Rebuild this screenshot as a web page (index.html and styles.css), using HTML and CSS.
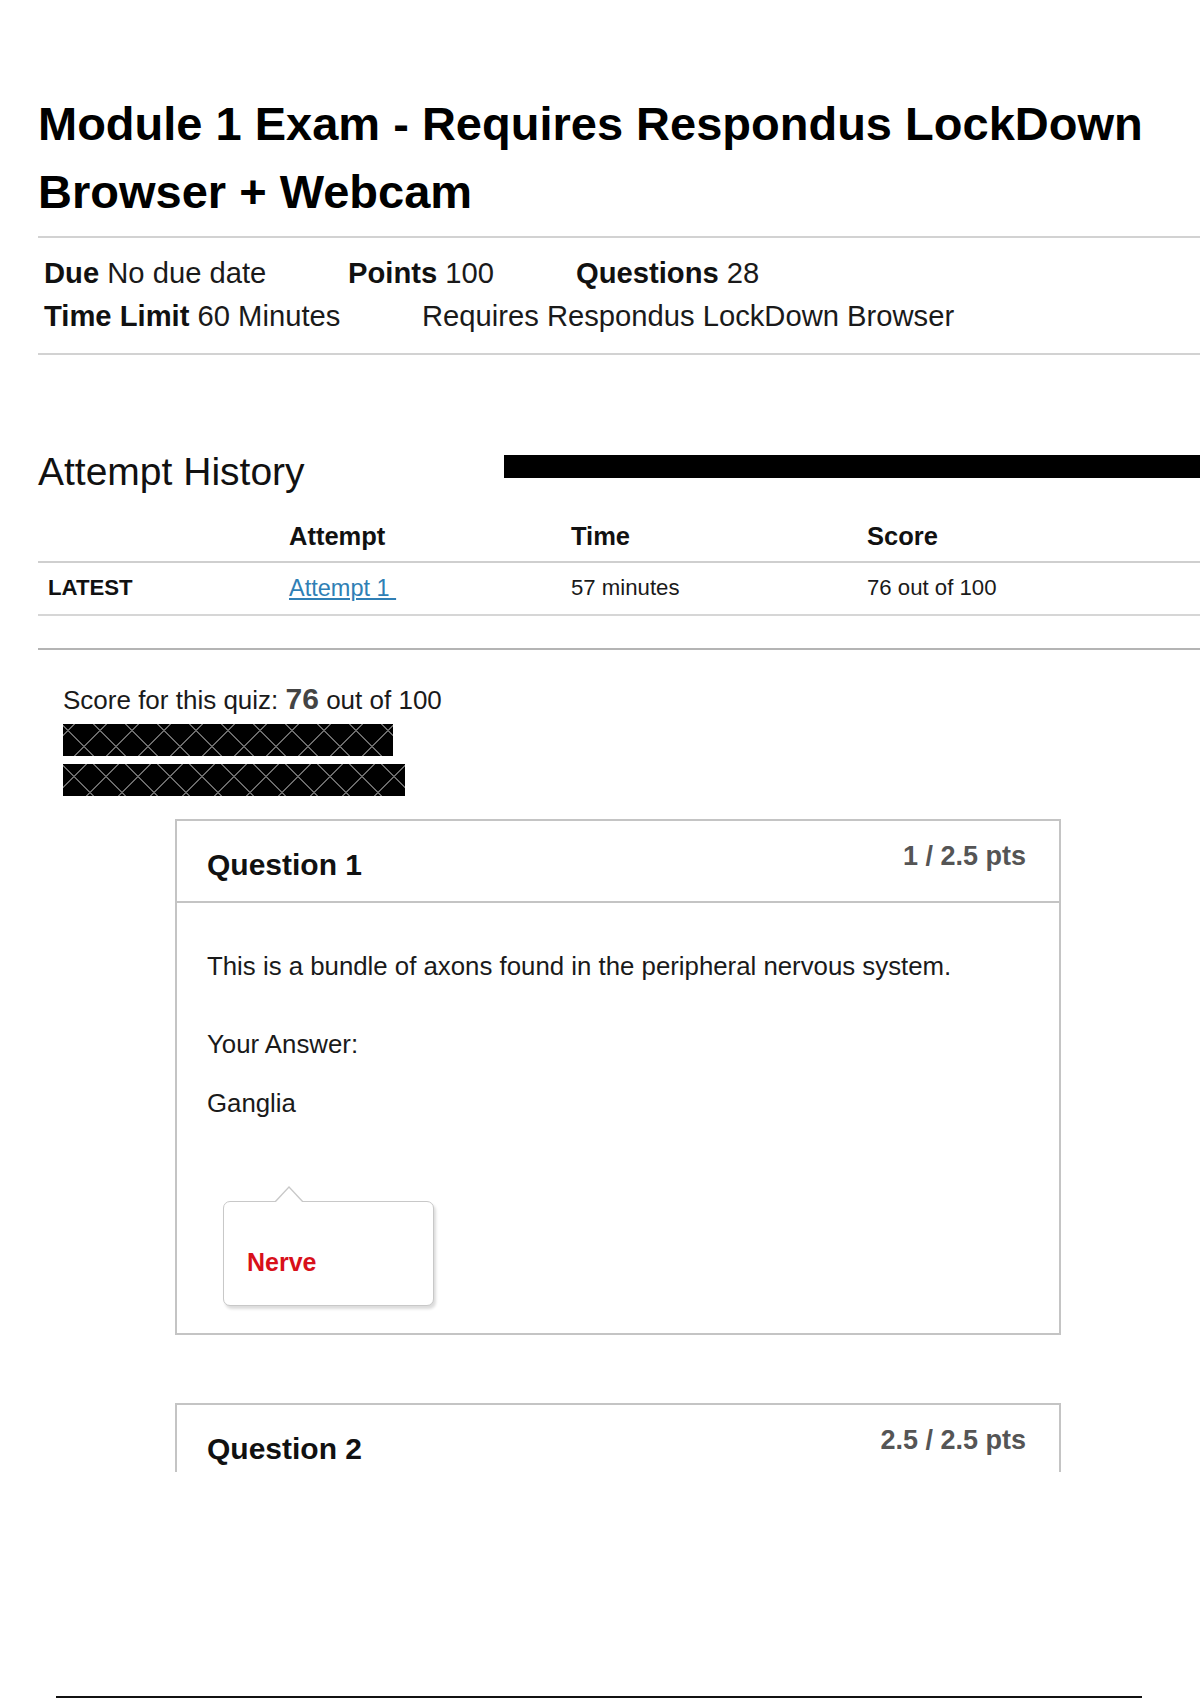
FILE: index.html
```html
<!DOCTYPE html>
<html lang="en">
<head>
<meta charset="utf-8">
<title>Module 1 Exam</title>
<link rel="stylesheet" href="styles.css">
</head>
<body>
<div class="page">
  <h1 class="title">Module 1 Exam - Requires Respondus LockDown Browser + Webcam</h1>

  <div class="details">
    <div class="drow">
      <div class="ditem w-due"><b>Due</b> No due date</div>
      <div class="ditem w-points"><b>Points</b> 100</div>
      <div class="ditem"><b>Questions</b> 28</div>
    </div>
    <div class="drow">
      <div class="ditem w-time"><b>Time Limit</b> 60 Minutes</div>
      <div class="ditem">Requires Respondus LockDown Browser</div>
    </div>
  </div>

  <div class="history-head">
    <h2 class="history-title">Attempt History</h2>
    <div class="redact-bar"></div>
  </div>

  <div class="attempts">
    <div class="th"></div>
    <div class="th">Attempt</div>
    <div class="th">Time</div>
    <div class="th">Score</div>
    <div class="td latest">LATEST</div>
    <div class="td"><a class="attempt-link" href="#">Attempt 1&nbsp;</a></div>
    <div class="td">57 minutes</div>
    <div class="td">76 out of 100</div>
  </div>
  <div class="sep"></div>

  <div class="score-block">
    <div class="score-line">Score for this quiz: <span class="score-num">76</span> out of 100</div>
    <div class="hatch hatch-1"></div>
    <div class="hatch hatch-2"></div>
  </div>

  <div class="question">
    <div class="q-head">
      <h3 class="q-title">Question 1</h3>
      <div class="q-pts">1 / 2.5 pts</div>
    </div>
    <div class="q-body">
      <p class="q-text">This is a bundle of axons found in the peripheral nervous system.</p>
      <p class="q-label">Your Answer:</p>
      <p class="q-answer">Ganglia</p>
      <div class="correct-tip"><span class="correct">Nerve</span></div>
    </div>
  </div>

  <div class="question question-cut">
    <div class="q-head">
      <h3 class="q-title">Question 2</h3>
      <div class="q-pts">2.5 / 2.5 pts</div>
    </div>
  </div>

  <div class="bottom-rule"></div>
</div>
</body>
</html>
```

FILE: styles.css
```css
* { box-sizing: border-box; }

html, body {
  margin: 0;
  padding: 0;
  background: #ffffff;
}

body {
  font-family: "Liberation Sans", Arial, sans-serif;
  color: #151515;
  width: 1200px;
  min-height: 1700px;
  overflow-x: hidden;
}

.page {
  padding: 90px 0 0 38px;
}

.title {
  margin: 0;
  font-size: 47px;
  line-height: 68px;
  font-weight: 700;
  color: #000;
  width: 1140px;
}

.details {
  margin-top: 10px;
  border-top: 2px solid #d2d2d2;
  border-bottom: 2px solid #d2d2d2;
  padding: 14px 0 15px 6px;
  font-size: 29.2px;
  line-height: 43px;
  color: #1a1a1a;
}

.drow {
  display: flex;
}

.ditem b { font-weight: 700; color: #111; }

.w-due { width: 304px; }
.w-points { width: 228px; }
.w-time { width: 378px; }

.history-head {
  display: flex;
  align-items: flex-start;
  margin-top: 93px;
}

.history-title {
  margin: 0;
  width: 466px;
  font-size: 39px;
  line-height: 48px;
  font-weight: 400;
  color: #111;
}

.redact-bar {
  flex: 1;
  height: 23px;
  margin-top: 7px;
  background: #000;
}

.attempts {
  display: grid;
  grid-template-columns: 251px 282px 296px 1fr;
}

.th {
  padding: 25px 0 10px 0;
  font-size: 25.5px;
  line-height: 30px;
  font-weight: 700;
  color: #111;
  border-bottom: 2px solid #cfcfcf;
}

.td {
  padding: 10px 0 10px 0;
  font-size: 22.2px;
  line-height: 30px;
  color: #1a1a1a;
  border-bottom: 2px solid #d6d6d6;
}

.td.latest {
  padding-left: 10px;
  font-weight: 700;
  color: #111;
}

.attempt-link {
  color: #2f7fb5;
  text-decoration: underline;
  font-size: 23.5px;
}

.sep {
  margin-top: 32px;
  border-bottom: 2px solid #b4b4b4;
}

.score-block {
  padding: 35px 0 0 25px;
}

.score-line {
  font-size: 26px;
  line-height: 30px;
  height: 30px;
  color: #1a1a1a;
}

.score-num {
  font-size: 30px;
  font-weight: 700;
  color: #444;
  line-height: 20px;
}

.hatch {
  height: 32px;
  background-color: #000;
  background-image:
    repeating-linear-gradient(45deg, transparent 0 21px, #6a6a6a 21px 22.6px),
    repeating-linear-gradient(-45deg, transparent 0 21px, #6a6a6a 21px 22.6px);
}

.hatch-1 { width: 330px; margin-top: 9px; }
.hatch-2 { width: 342px; margin-top: 8px; }

.question {
  margin: 23px 0 0 137px;
  width: 886px;
  border: 2px solid #c4c4c4;
}

.q-head {
  display: flex;
  justify-content: space-between;
  align-items: flex-start;
  padding: 18px 33px 19px 30px;
  border-bottom: 2px solid #c4c4c4;
}

.q-title {
  margin: 9px 0 0 0;
  font-size: 30px;
  line-height: 34px;
  font-weight: 700;
  color: #111;
}

.q-pts {
  font-size: 27px;
  line-height: 34px;
  font-weight: 700;
  color: #555;
}

.q-body {
  padding: 48px 30px 27px 30px;
}

.q-body p {
  margin: 0;
  font-size: 25.8px;
  line-height: 30px;
  color: #1a1a1a;
}

.q-label { margin-top: 48px !important; }
.q-answer { margin-top: 29px !important; }

.correct-tip {
  position: relative;
  margin: 83px 0 0 16px;
  width: 211px;
  height: 105px;
  padding: 45px 0 0 23px;
  border: 1px solid #c8c8c8;
  border-radius: 7px;
  background: #fff;
  box-shadow: 2px 3px 3px rgba(0, 0, 0, 0.14);
}

.correct-tip::before {
  content: "";
  position: absolute;
  left: 50px;
  top: -16px;
  border-left: 15px solid transparent;
  border-right: 15px solid transparent;
  border-bottom: 16px solid #c8c8c8;
}

.correct-tip::after {
  content: "";
  position: absolute;
  left: 51px;
  top: -14px;
  border-left: 14px solid transparent;
  border-right: 14px solid transparent;
  border-bottom: 15px solid #fff;
}

.correct {
  font-size: 25px;
  line-height: 30px;
  font-weight: 700;
  color: #d8101a;
}

.question-cut {
  margin-top: 68px;
  height: 69px;
  overflow: hidden;
  border-bottom: none;
}

.question-cut .q-head {
  border-bottom: none;
}

.bottom-rule {
  margin: 224px 0 0 18px;
  width: 1086px;
  height: 2px;
  background: #111;
}
```
